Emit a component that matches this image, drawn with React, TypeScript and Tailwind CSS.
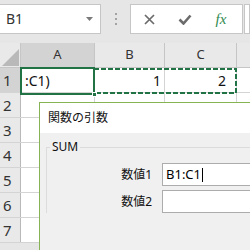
import React from "react";

const font = { fontFamily: '"Noto Sans", "Noto Sans CJK JP", sans-serif' };

const cols = [
	{ key: "A", w: "w-[74px]" },
	{ key: "B", w: "w-[70px]" },
	{ key: "C", w: "w-[72px]" },
];

const rows = [1, 2, 3, 4, 5, 6, 7];

function FormulaBar() {
	return (
		<div className="flex h-[43px] items-start pt-[4px]">
			<div className="ml-[-1px] flex h-[30px] w-[102px] items-center justify-between border border-[#c6c6c6] bg-white pl-[6px] pr-[7px]">
				<span className="text-[14px] leading-none text-[#333]">B1</span>
				<svg width="7" height="4" viewBox="0 0 7 4">
					<polygon points="0,0 7,0 3.5,4" fill="#7a7a7a" />
				</svg>
			</div>
			<div className="flex h-[30px] w-[29px] flex-col items-center justify-center gap-[3px]">
				<span className="h-[2px] w-[2px] bg-[#a3a3a3]" />
				<span className="h-[2px] w-[2px] bg-[#a3a3a3]" />
				<span className="h-[2px] w-[2px] bg-[#a3a3a3]" />
			</div>
			<div className="flex h-[30px] w-[113px] items-center border border-[#c6c6c6] bg-white">
				<div className="flex w-[36px] justify-center">
					<svg width="11" height="11" viewBox="0 0 11 11">
						<path d="M1 1 L10 10 M10 1 L1 10" stroke="#6b6b6b" strokeWidth="1.7" />
					</svg>
				</div>
				<div className="flex w-[36px] justify-center">
					<svg width="14" height="11" viewBox="0 0 14 11">
						<path d="M1.5 5.5 L5.5 9.5 L12.5 1.5" stroke="#6b6b6b" strokeWidth="2.6" fill="none" />
					</svg>
				</div>
				<div className="flex w-[36px] justify-center">
					<span
						className="text-[15px] italic leading-none text-[#2f8a4f]"
						style={{ fontFamily: '"Liberation Serif", serif' }}
					>
						fx
					</span>
				</div>
			</div>
			<div className="ml-[1px] h-[30px] flex-1 border border-[#c6c6c6] bg-white" />
		</div>
	);
}

function Grid() {
	return (
		<div>
			<div className="flex h-[25px] border-b border-[#c6c6c6] bg-[#e9e9e9]">
				<div className="flex w-[21px] items-end justify-end border-r border-[#c6c6c6] pb-[1px] pr-[1px]">
					<svg width="17" height="17" viewBox="0 0 17 17">
						<polygon points="17,0 17,17 0,17" fill="#b9b9b9" />
					</svg>
				</div>
				{cols.map((c) => (
					<div
						key={c.key}
						className={`${c.w} flex items-center justify-center border-r border-[#c6c6c6] text-[13px] text-[#333] ${
							c.key === "A" ? "bg-[#d3d3d3]" : ""
						}`}
					>
						{c.key}
					</div>
				))}
				<div className="flex-1" />
			</div>
			{rows.map((r) => (
				<div key={r} className="flex h-[25px] border-b border-[#d4d4d4] bg-white">
					<div
						className={`flex w-[21px] items-center border-r border-[#b9b9b9] pl-[3px] text-[15px] text-[#333] ${
							r === 1 ? "bg-[#d3d3d3]" : "bg-[#e9e9e9]"
						}`}
					>
						{r}
					</div>
					<div className="flex w-[74px] items-center border-r border-[#d4d4d4] pl-[4px] text-[14px] text-[#111]">
						{r === 1 ? ":C1)" : ""}
					</div>
					<div className="flex w-[70px] items-center justify-end border-r border-[#d4d4d4] pr-[3px] text-[14px] text-[#111]">
						{r === 1 ? "1" : ""}
					</div>
					<div className="flex w-[72px] items-center justify-end border-r border-[#d4d4d4] pr-[10px] text-[14px] text-[#111]">
						{r === 1 ? "2" : ""}
					</div>
					<div className="flex-1" />
				</div>
			))}
		</div>
	);
}

function Dialog() {
	return (
		<div className="absolute left-[39px] top-[102px] h-[200px] w-[300px] border border-[#86b454] bg-[#f0f0f0]">
			<div className="flex h-[30px] items-center bg-white pl-[8px] text-[12px] text-[#111]">関数の引数</div>
			<fieldset className="ml-[6px] mt-[6px] border-l border-t border-[#dcdcdc] pt-[8px]">
				<legend className="ml-[3px] px-[2px] text-[12px] leading-[16px] text-[#111]">SUM</legend>
				<div className="flex flex-col gap-[4px]">
					<div className="flex items-center">
						<div className="w-[105px] text-right text-[12px] text-[#111]">数値1</div>
						<div className="ml-[10px] flex h-[23px] w-[140px] items-center border border-[#acacac] bg-white pl-[3px] text-[13px] text-black">
							B1:C1
							<span className="ml-[1px] h-[14px] w-[1px] bg-black" />
						</div>
					</div>
					<div className="flex items-center">
						<div className="w-[105px] text-right text-[12px] text-[#111]">数値2</div>
						<div className="ml-[10px] h-[23px] w-[140px] border border-[#acacac] bg-white" />
					</div>
				</div>
			</fieldset>
		</div>
	);
}

export default function App() {
	return (
		<div className="relative h-[250px] w-[250px] overflow-hidden bg-[#e6e6e6]" style={font}>
			<FormulaBar />
			<Grid />
			{/* copy range B1:C1 */}
			<svg className="absolute left-[93px] top-[68px]" width="145" height="27" viewBox="0 0 145 27">
				<rect x="1" y="1" width="142" height="24" fill="none" stroke="#217346" strokeWidth="2" strokeDasharray="5 2" />
			</svg>
			{/* active cell A1 */}
			<div className="absolute left-[20px] top-[67px] h-[28px] w-[75px] border-2 border-[#217346]" />
			<div className="absolute left-[92px] top-[92px] h-[5px] w-[5px] border border-white bg-[#217346]" />
			<Dialog />
		</div>
	);
}
